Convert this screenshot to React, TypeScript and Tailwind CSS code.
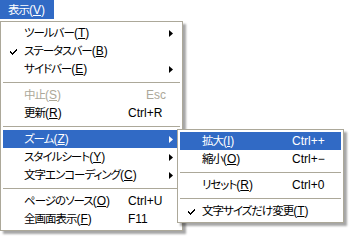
const font = "font-['Liberation_Sans','Noto_Sans_CJK_JP',sans-serif]";
const jp = "font-['Noto_Sans_CJK_JP',sans-serif] [font-feature-settings:'palt'] text-[11.5px] tracking-[-1px]";

type Item =
  | { sep: true }
  | {
      sep?: false;
      label: string;
      key: string;
      shortcut?: string;
      check?: boolean;
      arrow?: boolean;
      disabled?: boolean;
      active?: boolean;
    };

const mainItems: Item[] = [
  { label: 'ツールバー', key: 'T', arrow: true },
  { label: 'ステータスバー', key: 'B', check: true },
  { label: 'サイドバー', key: 'E', arrow: true },
  { sep: true },
  { label: '中止', key: 'S', shortcut: 'Esc', disabled: true },
  { label: '更新', key: 'R', shortcut: 'Ctrl+R' },
  { sep: true },
  { label: 'ズーム', key: 'Z', arrow: true, active: true },
  { label: 'スタイルシート', key: 'Y', arrow: true },
  { label: '文字エンコーディング', key: 'C', arrow: true },
  { sep: true },
  { label: 'ページのソース', key: 'O', shortcut: 'Ctrl+U' },
  { label: '全画面表示', key: 'F', shortcut: 'F11' },
];

const zoomItems: Item[] = [
  { label: '拡大', key: 'I', shortcut: 'Ctrl++', active: true },
  { label: '縮小', key: 'O', shortcut: 'Ctrl+−' },
  { sep: true },
  { label: 'リセット', key: 'R', shortcut: 'Ctrl+0' },
  { sep: true },
  { label: '文字サイズだけ変更', key: 'T', check: true },
];

function Check() {
  return (
    <svg width="7" height="7" viewBox="0 0 7 7" className="block">
      <path d="M0 3h1v1h1v1h1v-1h1v-1h1v-1h1v-1h1v2h-1v1h-1v1h-1v1h-1v1h-1v-1h-1v-1h-1z" fill="currentColor" />
    </svg>
  );
}

function Arrow() {
  return (
    <svg width="4" height="7" viewBox="0 0 4 7" className="block">
      <path d="M0 0L4 3.5L0 7Z" fill="currentColor" />
    </svg>
  );
}

function Menu({ items, checkW, labelW, width }: { items: Item[]; checkW: string; labelW: string; width: string }) {
  return (
    <div className={`${width} border border-[#aca899] bg-white p-[2px] shadow-[3px_3px_2px_rgba(0,0,0,0.35)]`}>
      {items.map((it, i) =>
        it.sep ? (
          <div key={i} className="flex h-[8px] items-center">
            <div className="h-px w-full bg-[#aca899]" />
          </div>
        ) : (
          <div
            key={i}
            className={`flex h-[18px] items-center text-[12px] leading-none ${
              it.active ? 'bg-[#316ac5] text-white' : it.disabled ? 'text-[#aca899]' : 'text-black'
            }`}
          >
            <div className={`${checkW} flex shrink-0 justify-end pr-[7px]`}>{it.check && <Check />}</div>
            <div className={`${labelW} shrink-0 whitespace-nowrap`}>
              <span className={jp}>{it.label}</span>(<span className="underline underline-offset-1">{it.key}</span>)
            </div>
            <div className={`flex-1 whitespace-nowrap ${it.disabled ? 'pl-[18px]' : ''}`}>{it.shortcut}</div>
            {it.arrow && (
              <div className="mr-[7px]">
                <Arrow />
              </div>
            )}
          </div>
        )
      )}
    </div>
  );
}

export default function App() {
  return (
    <div className={`relative h-[245px] w-[359px] overflow-hidden bg-white ${font}`}>
      {/* Menu bar */}
      <div className="mb-[2px] flex h-[19px]">
        <div className="flex w-[54px] items-center bg-[#316ac5] pl-[8px] text-[12px] leading-none text-white">
          <span className={jp}>表示</span>(<span className="underline underline-offset-1">V</span>)
        </div>
      </div>

      {/* 表示 menu */}
      <Menu items={mainItems} checkW="w-[21px]" labelW="w-[104px]" width="w-[183px]" />

      {/* ズーム submenu */}
      <div className="absolute left-[177px] top-[129px]">
        <Menu items={zoomItems} checkW="w-[22px]" labelW="w-[90px]" width="w-[167px]" />
      </div>
    </div>
  );
}
